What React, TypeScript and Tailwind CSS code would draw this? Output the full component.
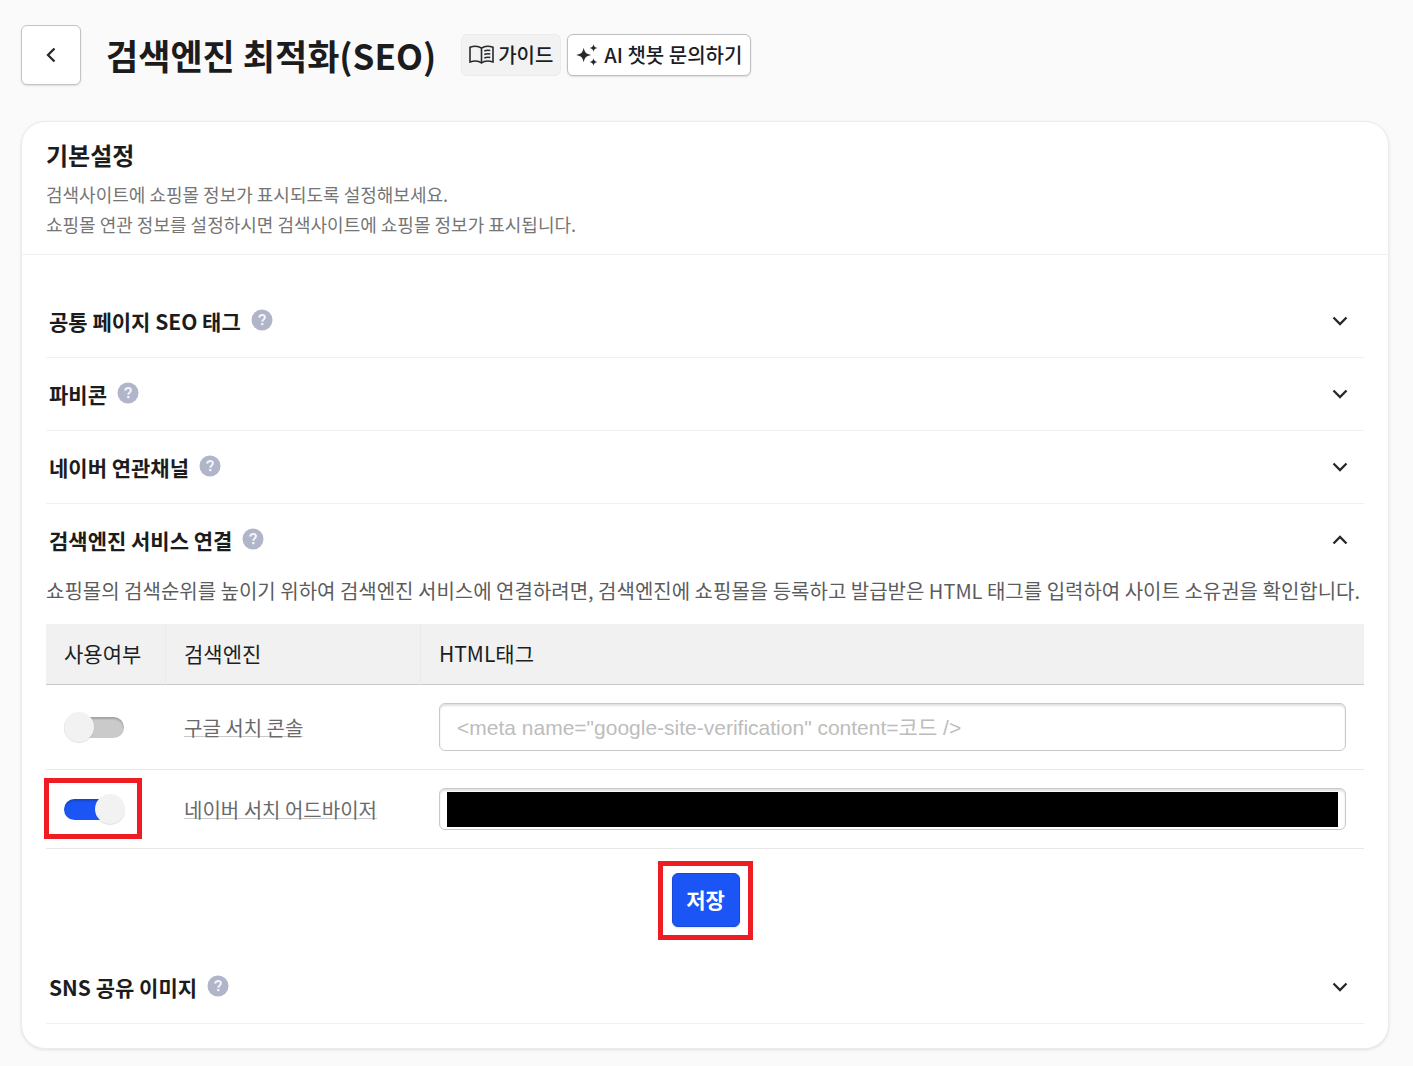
import { useState, type ReactNode } from "react";

function HelpButton({ label }: { label: string }) {
  return (
    <button type="button" aria-label={`${label} 도움말`} className="mb-[2px] shrink-0">
      <svg width="22" height="22" viewBox="0 0 22 22" fill="none">
        <circle cx="11" cy="11" r="10.5" fill="#b0b5ca" />
        <path
          d="M8.2 8.6c.1-1.7 1.300-2.700 2.900-2.700s2.800 1 2.800 2.400c0 1.200-.7 1.800-1.500 2.400-.8.600-1.100 1-1.100 2"
          stroke="#f4f5fa"
          strokeWidth="2"
        />
        <rect x="10.200" y="14" width="2.200" height="2.200" fill="#f4f5fa" />
      </svg>
    </button>
  );
}

function Chevron({ open }: { open: boolean }) {
  return (
    <svg width="18" height="18" viewBox="0 0 18 18" fill="none" stroke="#26282b" strokeWidth="2.300">
      <path d={open ? "M2.500 12.500 9 6l6.500 6.500" : "M2.500 5.500 9 12l6.500-6.500"} />
    </svg>
  );
}

function Section({
  title,
  initiallyOpen = false,
  children,
}: {
  title: string;
  initiallyOpen?: boolean;
  children?: ReactNode;
}) {
  const [open, setOpen] = useState(initiallyOpen);
  return (
    <section className={open && children ? "" : "border-b border-[#f0f0f0]"}>
      <div className="flex h-[72px] items-center pr-[15px] pl-[3px]">
        <h3 className="mr-[10px] text-[21px] leading-8 font-bold text-[#1c1c1c]">{title}</h3>
        <HelpButton label={title} />
        <button
          type="button"
          aria-label={title}
          aria-expanded={open}
          onClick={() => setOpen(!open)}
          className="ml-auto"
        >
          <Chevron open={open} />
        </button>
      </div>
      {open && children}
    </section>
  );
}

function Toggle({ label, defaultChecked }: { label: string; defaultChecked?: boolean }) {
  return (
    <input
      type="checkbox"
      role="switch"
      aria-label={label}
      defaultChecked={defaultChecked}
      className="relative block h-[21px] w-[60px] cursor-pointer appearance-none rounded-full bg-[#cacaca] shadow-[inset_0_2px_2px_rgba(0,0,0,0.2)] before:absolute before:-top-[5px] before:left-0 before:size-[30px] before:rounded-full before:bg-[#f2f2f2] before:shadow-[0_1px_1px_rgba(0,0,0,0.12)] checked:bg-[#1b55f5] checked:before:left-[31px]"
    />
  );
}

const inputClass =
  "block w-full rounded-md border border-[#c9c9c9] bg-white px-[17px] pt-[2px] font-['Liberation_Sans','Noto_Sans_CJK_KR',sans-serif] text-[21px] text-[#1b1e26] shadow-[inset_0_2px_2px_rgba(0,0,0,0.12)] placeholder:text-[#bdbdbd] outline-none";

const linkClass =
  "border-b border-[#c9c9c9] text-[20px] leading-4 whitespace-nowrap text-[#6a6a6a] inline-block";

export default function App() {
  return (
    <main className="min-h-screen bg-[#fafafa] pt-[25px] pr-6 pb-4 pl-[21px] font-['Noto_Sans_CJK_KR',sans-serif] text-[#1b1e26]">
      <header className="flex h-[60px] items-center">
        <button
          type="button"
          aria-label="뒤로"
          className="flex size-[60px] items-center justify-center rounded-md border border-[#c4c4c4] bg-white shadow-[0_1px_2px_rgba(0,0,0,0.12)]"
        >
          <svg width="18" height="18" viewBox="0 0 18 18" fill="none" stroke="#26282b" strokeWidth="2.300">
            <path d="M12.500 2.500 6 9l6.500 6.500" />
          </svg>
        </button>
        <h1 className="ml-[25px] text-[35px] leading-[48px] font-bold whitespace-nowrap text-[#1c1c1c]">
          검색엔진 최적화(SEO)
        </h1>
        <button
          type="button"
          className="ml-[25px] flex h-[42px] items-center gap-1 rounded-md border border-[#ebebeb] bg-[#f2f2f2] px-[7px] text-[20px] font-medium whitespace-nowrap"
        >
          <svg width="25" height="20" viewBox="0 0 25 20" fill="none" stroke="#26282b" strokeWidth="1.600">
            <path d="M12.500 3.200C10 1.400 5 .9 1 2.300v14.600c4-1.200 9-1 11.500 1.100 2.500-2.100 7.500-2.300 11.500-1.100V2.300C20 .9 15 1.400 12.500 3.200V18" />
            <path d="M15.300 6c1.800-.8 4-.9 6-.5M15.300 9.500c1.800-.8 4-.9 6-.5M15.300 13c1.800-.8 4-.9 6-.5" strokeWidth="1.400" />
          </svg>
          가이드
        </button>
        <button
          type="button"
          className="ml-[6px] flex h-[42px] items-center gap-[6px] rounded-md border border-[#bfbfbf] bg-white px-2 text-[20px] font-medium whitespace-nowrap shadow-[0_1px_2px_rgba(0,0,0,0.12)]"
        >
          <svg width="22" height="22" viewBox="0 0 22 22" fill="#26282b">
            <path d="M7.700 3.500c.9 4.900 2.200 6.300 7.500 7.500-5.300 1.200-6.600 2.600-7.500 7.500C6.800 13.600 5.500 12.200.2 11c5.300-1.200 6.600-2.600 7.500-7.500Z" />
            <path d="M17.500.2c.5 2.400 1.300 3.200 3.900 3.800-2.600.6-3.400 1.400-3.900 3.800-.5-2.400-1.300-3.200-3.900-3.800 2.600-.6 3.400-1.400 3.900-3.800ZM17.500 14.200c.5 2.400 1.300 3.200 3.900 3.800-2.600.6-3.400 1.400-3.900 3.800-.5-2.400-1.300-3.200-3.900-3.800 2.600-.6 3.400-1.400 3.900-3.800Z" />
          </svg>
          AI 챗봇 문의하기
        </button>
      </header>

      <div className="mt-9 rounded-3xl border border-[#ececec] bg-white shadow-[0_1px_3px_rgba(0,0,0,0.1)]">
        <div className="border-b border-[#f0f0f0] px-6 pt-[15px] pb-[15px]">
          <h2 className="text-[24px] leading-9 font-bold text-[#1c1c1c]">기본설정</h2>
          <p className="mt-[6px] text-[18px] leading-[30px] text-[#757575]">
            검색사이트에 쇼핑몰 정보가 표시되도록 설정해보세요.
            <br />
            쇼핑몰 연관 정보를 설정하시면 검색사이트에 쇼핑몰 정보가 표시됩니다.
          </p>
        </div>

        <div className="px-6 pt-[30px] pb-6">
          <Section title="공통 페이지 SEO 태그" />
          <Section title="파비콘" />
          <Section title="네이버 연관채널" />
          <Section title="검색엔진 서비스 연결" initiallyOpen>
            <p className="text-[20px] leading-[30px] text-[#5c5c5c]">
              쇼핑몰의 검색순위를 높이기 위하여 검색엔진 서비스에 연결하려면, 검색엔진에 쇼핑몰을 등록하고 발급받은 HTML 태그를 입력하여 사이트 소유권을 확인합니다.
            </p>
            <table className="mt-[18px] w-full table-fixed border-separate border-spacing-0">
              <thead>
                <tr className="h-[61px] bg-[#f1f1f1] text-left text-[21px]">
                  <th scope="col" className="w-[120px] border-r border-b border-r-[#ebebeb] border-b-[#c9c9c9] pl-[18px] font-normal">
                    사용여부
                  </th>
                  <th scope="col" className="w-[255px] border-r border-b border-r-[#ebebeb] border-b-[#c9c9c9] pl-[18px] font-normal">
                    검색엔진
                  </th>
                  <th scope="col" className="border-b border-b-[#c9c9c9] pl-[18px] font-normal">
                    HTML태그
                  </th>
                </tr>
              </thead>
              <tbody>
                <tr>
                  <td className="border-b border-[#e8e8e8] pl-[18px]">
                    <Toggle label="구글 서치 콘솔 사용" />
                  </td>
                  <td className="border-b border-[#e8e8e8] pt-1 pl-[18px]">
                    <a href="#google" className={linkClass}>
                      구글 서치 콘솔
                    </a>
                  </td>
                  <td className="border-b border-[#e8e8e8] p-[18px]">
                    <input
                      type="text"
                      aria-label="구글 서치 콘솔 HTML태그"
                      placeholder={'<meta name="google-site-verification" content=코드 />'}
                      className={`${inputClass} h-12`}
                    />
                  </td>
                </tr>
                <tr>
                  <td className="relative border-b border-[#e8e8e8] pl-[18px]">
                    <Toggle label="네이버 서치 어드바이저 사용" defaultChecked />
                    <div className="pointer-events-none absolute top-2 -left-[2px] h-[61px] w-[98px] border-[5px] border-[#ef1c24]" />
                  </td>
                  <td className="border-b border-[#e8e8e8] pt-1 pl-[18px]">
                    <a href="#naver" className={linkClass}>
                      네이버 서치 어드바이저
                    </a>
                  </td>
                  <td className="border-b border-[#e8e8e8] p-[18px]">
                    <div className="relative">
                      <input
                        type="text"
                        aria-label="네이버 서치 어드바이저 HTML태그"
                        className={`${inputClass} h-[42px]`}
                      />
                      <div className="absolute inset-x-2 top-1 bottom-[3px] bg-black" />
                    </div>
                  </td>
                </tr>
              </tbody>
            </table>
            <div className="mt-3 mb-[11px] flex justify-center">
              <div className="border-[5px] border-[#ef1c24] pt-[7px] pr-2 pb-2 pl-[9px]">
                <button
                  type="button"
                  className="block h-[54px] w-[68px] rounded-md border border-[#1748d6] bg-[#1b55f5] text-[21px] font-bold text-white shadow-[0_1px_2px_rgba(0,0,0,0.12)]"
                >
                  저장
                </button>
              </div>
            </div>
          </Section>
          <Section title="SNS 공유 이미지" />
        </div>
      </div>
    </main>
  );
}
